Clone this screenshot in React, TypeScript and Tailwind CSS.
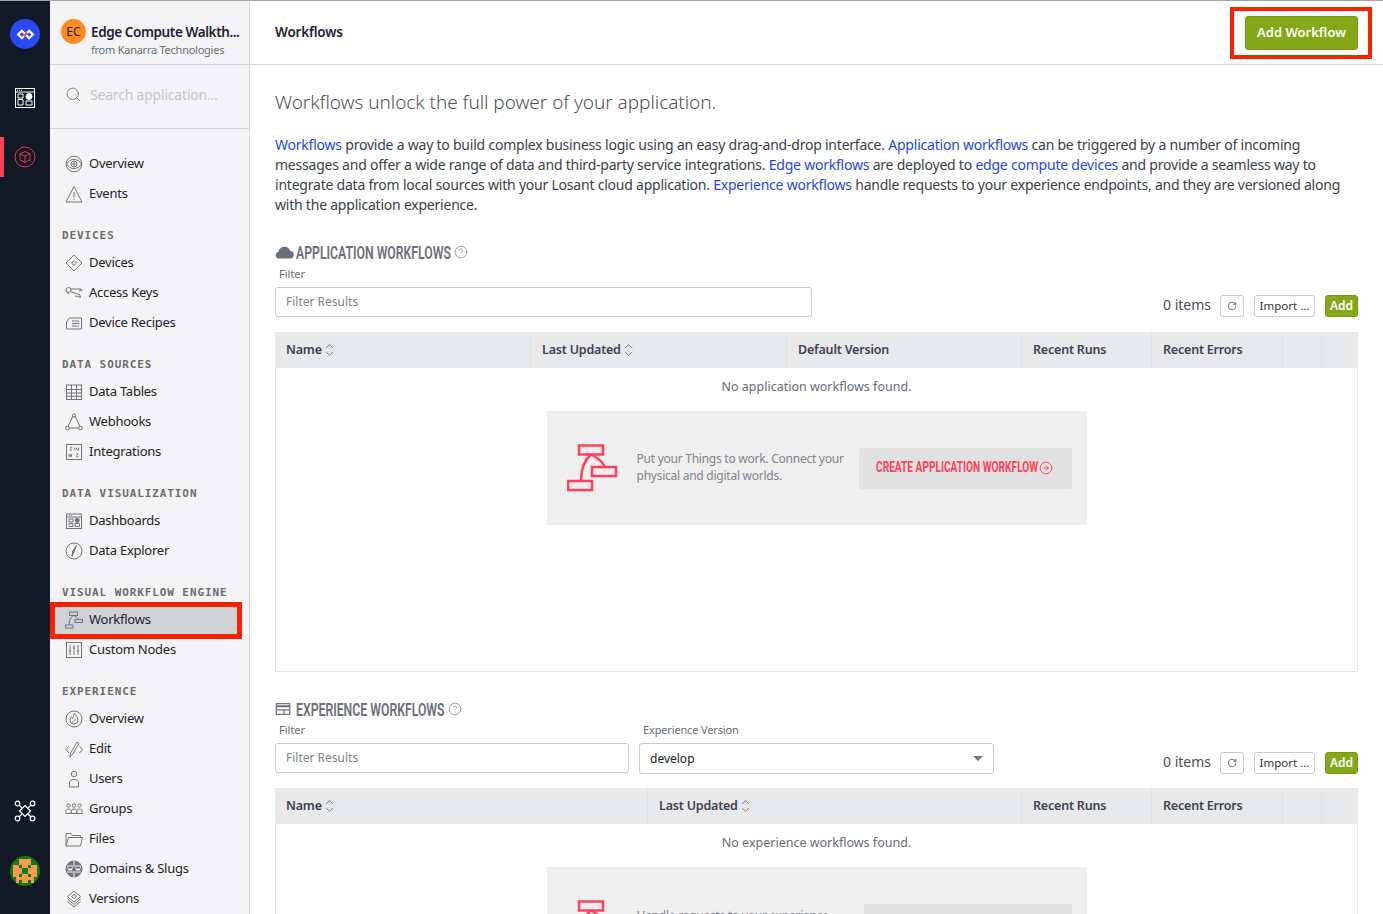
import React from "react";
import { Search, CircleHelp, RotateCw, CircleArrowRight } from "lucide-react";

const bodyFont = { fontFamily: '"Noto Sans", "Open Sans", sans-serif' };

const icons: Record<string, React.ReactNode> = {
  eye: (
    <>
      <circle cx="10" cy="10" r="7.8" />
      <path d="M2.6 10c2-3.2 4.5-4.6 7.4-4.6s5.4 1.4 7.4 4.6c-2 3.2-4.5 4.6-7.4 4.6S4.600 13.200 2.600 10z" />
      <circle cx="10" cy="10" r="3" />
      <circle cx="10" cy="10" r="1.200" />
    </>
  ),
  warn: (
    <>
      <path d="M10 2.500 18 18H2z" />
      <path d="M10 8v5.500M10 15v1" />
    </>
  ),
  device: (
    <>
      <path d="M10 2l8 8-8 8-8-8z" />
      <path d="M10 7.500l2.500 2.500-2.500 2.500L7.500 10z" />
    </>
  ),
  keys: (
    <>
      <circle cx="4.500" cy="7" r="2.500" />
      <path d="M7 6h10l1 1.500-3 .5M6.500 8.500 16 12l.5 2.500-3-1.500-1 1-1.500-1.500" />
      <path d="M3 9.500 5 11" />
    </>
  ),
  recipe: (
    <>
      <path d="M2.500 16V9l3-4h12v11z" />
      <path d="M8 8h7M8 10.500h7M8 13h7" />
    </>
  ),
  table: (
    <>
      <rect x="2.500" y="3" width="15" height="14.500" />
      <path d="M2.500 7.500h15M2.500 11h15M2.500 14.300h15M7.500 3v14.500M12.500 3v14.500" />
    </>
  ),
  hook: (
    <>
      <path d="M9 4 4 14.500M11 4l5 10.500M5 16h10" />
      <circle cx="10" cy="3.500" r="1.600" />
      <circle cx="3.500" cy="16" r="1.800" />
      <circle cx="16.500" cy="16" r="1.800" />
    </>
  ),
  puzzle: (
    <>
      <rect x="2.500" y="2.500" width="15" height="15" />
      <path d="M6 5.500c1-1 2-.5 1.500.500s-1.500 1-1 2 1.500.5 1.500-.2M11 5.500v3M14.500 5.500v3M12 6l2 2M5 12v3M8 12l-1 3-1-3M12 12c1.500-1 2.500 0 1.500 1s-1.500.8-1 1.600 1.500.5 2-.3" />
    </>
  ),
  dash: (
    <>
      <rect x="2.500" y="3" width="15" height="14.500" />
      <path d="M2.500 6h15M5 4.500h.8M7 4.500h.8M5 8h4v3H5zM5 12.500h4V15.500H5zM11 12.500h4.500v3H11z" />
      <circle cx="13.200" cy="9.300" r="2.100" fill="#6f7480" />
    </>
  ),
  compass: (
    <>
      <circle cx="10" cy="10" r="8" />
      <path d="M12.500 4.500 8 15.500l.8-5.500z" fill="#6f7480" />
    </>
  ),
  flow: (
    <>
      <rect x="5.500" y="2" width="8" height="3.500" />
      <rect x="11" y="9.500" width="7.500" height="3" />
      <rect x="1.500" y="15" width="7.500" height="3" />
      <path d="M9.500 5.500c-3 2-4.500 5-4.500 9.500M9.500 5.500c2 1 4 2 5 4" />
    </>
  ),
  sliders: (
    <>
      <rect x="2.500" y="2.500" width="15" height="15" />
      <path d="M6 5v10M10 5v10M14 5v10M4.800 11h2.400M8.800 8h2.400M12.800 11h2.400" />
    </>
  ),
  flame: (
    <>
      <circle cx="10" cy="10" r="8" />
      <path d="M10.500 4c.5 2.500 3.500 4 3.500 7a4 4 0 0 1-8 0c0-1.500.8-2.500 1.500-3 .2 1 .6 1.500 1.200 1.700C9.500 8 9.500 5.500 10.500 4z" />
      <path d="M8.500 13.500c.5-1.500 2-2.500 3.200-2.800" />
    </>
  ),
  edit: (
    <path d="M5 7 2 10.500 5 14M15.500 7l3 3.500-3 3.500M13 3l2 1.500L8 16l-2 2 .2-3z" />
  ),
  user: (
    <>
      <circle cx="10" cy="5" r="2.700" />
      <path d="M5.500 18v-4c0-2 1.500-3.500 4.500-3.500s4.500 1.500 4.500 3.500v4z" />
    </>
  ),
  group: (
    <>
      <circle cx="4.500" cy="6.500" r="1.700" />
      <circle cx="10" cy="6.500" r="1.700" />
      <circle cx="15.500" cy="6.500" r="1.700" />
      <path d="M1.800 14.500v-2c0-1.500 1-2.500 2.700-2.500s2.700 1 2.700 2.500v2zM7.300 14.500v-2c0-1.500 1-2.500 2.700-2.500s2.700 1 2.700 2.500v2zM12.800 14.500v-2c0-1.500 1-2.500 2.700-2.500s2.700 1 2.700 2.500v2z" />
    </>
  ),
  folder: (
    <>
      <path d="M2 17V4.500h5L8.500 6.500h8v2" />
      <path d="M2 17 4.500 8.500H18.500L16.500 17z" />
    </>
  ),
  globe: (
    <>
      <circle cx="10" cy="10" r="8" fill="#6f7480" />
      <path d="M3 7h14M3 13h14M10 2v4M10 14v4" stroke="#f4f4f6" />
      <path d="M3.500 8.500 5 11.500 6 9.500 7 11.500 8.500 8.500M11.500 8.500 13 11.500 14 9.500 15 11.500 16.500 8.500" stroke="#f4f4f6" />
    </>
  ),
  versions: (
    <>
      <path d="M10 2l6.500 5.500L10 13 3.500 7.500z" />
      <path d="M10 5.500l2.500 2-2.500 2-2.500-2z" />
      <path d="M3.500 10 10 15.500 16.500 10M3.500 12.500 10 18l6.500-5.500" />
    </>
  ),
};

function NavIcon({ name }: { name: string }) {
  return (
    <svg viewBox="0 0 20 20" className="w-[20px] h-[20px] shrink-0" fill="none" stroke="#6f7480" strokeWidth="1">
      {icons[name]}
    </svg>
  );
}

const groups = [
  { items: [["eye", "Overview"], ["warn", "Events"]] },
  { title: "DEVICES", items: [["device", "Devices"], ["keys", "Access Keys"], ["recipe", "Device Recipes"]] },
  { title: "DATA SOURCES", items: [["table", "Data Tables"], ["hook", "Webhooks"], ["puzzle", "Integrations"]] },
  { title: "DATA VISUALIZATION", items: [["dash", "Dashboards"], ["compass", "Data Explorer"]] },
  { title: "VISUAL WORKFLOW ENGINE", items: [["flow", "Workflows"], ["sliders", "Custom Nodes"]] },
  {
    title: "EXPERIENCE",
    items: [
      ["flame", "Overview"],
      ["edit", "Edit"],
      ["user", "Users"],
      ["group", "Groups"],
      ["folder", "Files"],
      ["globe", "Domains & Slugs"],
      ["versions", "Versions"],
    ],
  },
];

function Rail() {
  return (
    <div className="w-[50px] shrink-0 bg-[#111926] flex flex-col items-center relative">
      <div className="mt-[18px] w-[30px] h-[30px] rounded-full bg-[#2a49f5] flex items-center justify-center">
        <svg viewBox="0 0 20 12" className="w-[19px] h-[11px]" fill="none" strokeWidth="2.400">
          <path d="M10 6 6 2 2 6l4 4 4-4" stroke="#fff" />
          <path d="M10 6l4 4 4-4-4-4-4 4" stroke="#fff" />
          <path d="M8 8l4-4" stroke="#ff4058" />
        </svg>
      </div>
      <svg viewBox="0 0 20 20" className="mt-[39px] w-[20px] h-[20px]" fill="none" stroke="#fff" strokeWidth="1">
        <rect x="0.500" y="0.500" width="19" height="19" />
        <path d="M.5 4h19M2 2.200h1M4 2.200h1M6 2.200h1M3 6h5v4H3zM3 11.500h5V17H3zM11 13h6v4h-6z" />
        <circle cx="14" cy="8.500" r="3" fill="#fff" />
      </svg>
      <div className="absolute left-0 top-[136px] w-[4px] h-[40px] bg-[#ff4058]" />
      <svg viewBox="0 0 22 22" className="mt-[38px] w-[22px] h-[22px]" fill="none" stroke="#e8344c" strokeWidth="1">
        <circle cx="11" cy="11" r="10" />
        <path d="M11 5.500l5 2.200v6L11 16.500l-5-2.800v-6zM6 7.700l5 2.500 5-2.500M11 10.200v6.300" />
      </svg>
      <div className="flex-1" />
      <svg viewBox="0 0 24 24" className="w-[24px] h-[24px] mb-[33px]" fill="none" stroke="#fff" strokeWidth="1.200">
        <path d="M12 6.500l5.500 5.500-5.500 5.500L6.500 12z" />
        <circle cx="4.500" cy="4.500" r="2.300" />
        <circle cx="19.500" cy="4.500" r="2.300" />
        <circle cx="4.500" cy="19.500" r="2.300" />
        <circle cx="19.500" cy="19.500" r="2.300" />
        <path d="M6.200 6.200 9 9M17.800 6.200 15 9M6.200 17.800 9 15M17.800 17.800 15 15" />
      </svg>
      <div className="w-[30px] h-[30px] rounded-full bg-[#137a13] overflow-hidden mb-[28px] relative">
        <svg viewBox="0 0 10 10" className="w-full h-full" shapeRendering="crispEdges">
          <path fill="#f79a52" d="M3 1h4v2H6v1H4V3H3zM1 3h2v1h1v1h2V4h1V3h2v4H8v2H2V7H1zM3 6v1h1V6zM6 6v1h1V6z" />
          <path fill="#137a13" d="M4 5h2v1H4zM3 8h1v1H3zM6 8h1v1H6z" />
        </svg>
      </div>
    </div>
  );
}

function Sidebar() {
  return (
    <aside className="w-[200px] shrink-0 bg-[#f4f4f6] border-r border-[#d4d5d9] flex flex-col overflow-hidden">
      <div className="h-[64px] shrink-0 border-b border-[#d4d5d9] flex items-center pl-[11px]">
        <div className="w-[25px] h-[25px] rounded-full bg-[#ff8a1e] text-[#1c2230] text-[12px] flex items-center justify-center mb-[2px]">EC</div>
        <div className="ml-[5px] min-w-0 mt-[14px]">
          <div className="text-[13.500px] leading-[18px] font-semibold text-[#1c2230] whitespace-nowrap tracking-[-0.4px]">Edge Compute Walkth...</div>
          <div className="text-[11px] leading-[14px] text-[#676c77] whitespace-nowrap mt-[2px] tracking-[-0.25px]">from Kanarra Technologies</div>
        </div>
      </div>
      <div className="h-[64px] shrink-0 border-b border-[#d4d5d9] flex items-center pl-[15px] pb-[4px]">
        <Search className="w-[17px] h-[17px] text-[#6f7480]" strokeWidth={1.300} />
        <span className="ml-[8px] text-[14px] text-[#c4c5c9] tracking-[-0.2px]">Search application...</span>
      </div>
      <nav className="pt-[20px]">
        {groups.map((g, i) => (
          <div key={i} className={g.title ? "mt-[15px]" : ""}>
            {g.title && (
              <div
                className="h-[24px] flex items-center pl-[12px] text-[11px] font-bold text-[#6c6c6c] tracking-[0.9px] whitespace-nowrap"
                style={{ fontFamily: '"DejaVu Sans Mono", monospace' }}
              >
                {g.title}
              </div>
            )}
            {g.items.map(([icon, label]) =>
              label === "Workflows" ? (
                <div key={label} className="relative w-[192px] h-[30px] flex items-center pl-[14px] bg-[#d1d2d5]">
                  <NavIcon name={icon} />
                  <span className="ml-[5px] text-[13px] text-[#1c2230] tracking-[-0.25px]">{label}</span>
                  <div className="absolute left-0 -top-[3px] w-[192px] h-[37px] border-[5px] border-[#fa2100]" />
                </div>
              ) : (
                <div key={icon + label} className="h-[30px] flex items-center pl-[14px]">
                  <NavIcon name={icon} />
                  <span className="ml-[5px] text-[13px] text-[#1c2230] tracking-[-0.25px]">{label}</span>
                </div>
              )
            )}
          </div>
        ))}
      </nav>
    </aside>
  );
}

function SortHead({ label }: { label: string }) {
  return (
    <div className="flex items-center pl-[11px] border-r border-[#dfe0e3]">
      <span className="text-[12.500px] font-semibold text-[#3d4350] tracking-[-0.2px]">{label}</span>
      <svg viewBox="0 0 10 15" className="ml-[3px] w-[9px] h-[14px]" fill="none" stroke="#6f7480" strokeWidth="1">
        <path d="M1 5.500 5 1.500l4 4M1 9.500l4 4 4-4" />
      </svg>
    </div>
  );
}

function PlainHead({ label }: { label: string }) {
  return (
    <div className="flex items-center pl-[11px] border-r border-[#dfe0e3]">
      <span className="text-[12.500px] font-semibold text-[#3d4350] tracking-[-0.2px]">{label}</span>
    </div>
  );
}

function FlowGraphic() {
  return (
    <svg viewBox="0 0 52 48" className="w-[52px] h-[48px]" fill="none" stroke="#ff4058" strokeWidth="2.500">
      <rect x="12" y="1.500" width="24" height="9" />
      <rect x="25" y="23" width="24" height="9" />
      <rect x="1" y="37" width="24" height="9" />
      <path d="M24 10.500c-7 6-10 14-10 26.500M24 10.500c6 3 11 6 14 12.500" />
    </svg>
  );
}

function Toolbar() {
  return (
    <div className="flex items-center">
      <span className="text-[14px] text-[#4a4f5a] mr-[9px] mb-[2px]">0 items</span>
      <div className="w-[24px] h-[22px] border border-[#c9cacd] rounded-[3px] flex items-center justify-center">
        <RotateCw className="w-[10px] h-[10px] text-[#444]" strokeWidth={1.800} />
      </div>
      <div className="ml-[10px] w-[61px] h-[22px] border border-[#c9cacd] rounded-[3px] flex items-center justify-center text-[11.500px] text-[#333]">Import ...</div>
      <div className="ml-[10px] w-[33px] h-[22px] rounded-[3px] bg-[#84a818] border border-[#76981a] flex items-center justify-center text-[12px] font-semibold text-white">Add</div>
    </div>
  );
}

function SectionTitle({ icon, label, width }: { icon: React.ReactNode; label: string; width: string }) {
  return (
    <div className="flex items-center h-[20px]">
      {icon}
      <div className={`${width} ml-[2px] overflow-visible`}>
        <div
          className="origin-left scale-x-[0.68] text-[18px] font-semibold text-[#6b6f78] whitespace-nowrap"
          style={{ fontFamily: "Roboto, sans-serif" }}
        >
          {label}
        </div>
      </div>
      <CircleHelp className="ml-[3px] w-[14px] h-[14px] text-[#7a7e87]" strokeWidth={1.200} />
    </div>
  );
}

export default function App() {
  return (
    <div className="h-screen overflow-hidden flex border-t border-[#a3a3a3] bg-white" style={bodyFont}>
      <Rail />
      <Sidebar />
      <main className="flex-1 min-w-0 flex flex-col">
        <header className="h-[64px] shrink-0 border-b border-[#d4d5d9] flex items-center justify-between pl-[25px] pr-[25px]">
          <h1 className="text-[13.500px] font-semibold text-[#1c2230] tracking-[-0.2px]">Workflows</h1>
          <div className="relative">
            <button className="w-[113px] h-[34px] rounded-[3px] bg-[#84a818] border border-[#76981a] text-white text-[13px] font-semibold">
              Add Workflow
            </button>
            <div className="absolute -left-[15px] -top-[9px] w-[142px] h-[52px] border-[4px] border-[#fa2100]" />
          </div>
        </header>

        <div className="flex-1 overflow-hidden pl-[25px] pr-[25px]">
          <h2 className="mt-[24px] text-[19px] leading-[26px] font-light text-[#4f535c] tracking-[-0.05px]">
            Workflows unlock the full power of your application.
          </h2>
          <p className="mt-[20px] text-[14px] leading-[20px] text-[#3a3f4a] tracking-[-0.22px]">
            <a className="text-[#1f48e0]">Workflows</a> provide a way to build complex business logic using an easy drag-and-drop interface.{" "}
            <a className="text-[#1f48e0]">Application workflows</a> can be triggered by a number of incoming messages and offer a wide range of data and third-party service integrations.{" "}
            <a className="text-[#1f48e0]">Edge workflows</a> are deployed to <a className="text-[#1f48e0]">edge compute devices</a> and provide a seamless way to integrate data from local sources with your Losant cloud application.{" "}
            <a className="text-[#1f48e0]">Experience workflows</a> handle requests to your experience endpoints, and they are versioned along with the application experience.
          </p>

          <section className="mt-[27px]">
            <SectionTitle
              label="APPLICATION WORKFLOWS"
              width="w-[155px]"
              icon={
                <svg viewBox="0 0 20 14" className="w-[19px] h-[13px]" fill="#6b6f78">
                  <path d="M4 13.500a3.700 3.700 0 0 1-.6-7.300C4 3 7 .8 10 .8c3 0 5.500 2 6.300 4.700a4 4 0 0 1-.6 8z" />
                </svg>
              }
            />
            <div className="mt-[4px] pl-[4px] text-[11px] leading-[16px] text-[#676c77]">Filter</div>
            <div className="flex items-end justify-between mt-[5px]">
              <div className="w-[537px] h-[30px] border border-[#c9cacd] rounded-[3px] flex items-center pl-[10px] text-[12px] text-[#80848d]">Filter Results</div>
              <Toolbar />
            </div>
            <div className="mt-[15px] grid grid-cols-[256px_256px_235px_130px_131px_39px_36px] h-[36px] bg-[#e8e9eb]">
              <SortHead label="Name" />
              <SortHead label="Last Updated" />
              <PlainHead label="Default Version" />
              <PlainHead label="Recent Runs" />
              <PlainHead label="Recent Errors" />
              <div className="border-r border-[#dfe0e3]" />
              <div />
            </div>
            <div className="h-[304px] border-x border-b border-[#e6e6e8] flex flex-col items-center">
              <div className="mt-[10px] text-[12.500px] leading-[18px] text-[#676c77]">No application workflows found.</div>
              <div className="mt-[15px] w-[540px] h-[114px] bg-[#efefef] flex items-center pl-[20px]">
                <FlowGraphic />
                <div className="ml-[18px] w-[222px] text-[12px] leading-[17px] text-[#80848d] tracking-[-0.25px] mb-[2px]">
                  Put your Things to work. Connect your physical and digital worlds.
                </div>
                <div className="w-[213px] h-[41px] rounded-[3px] bg-[#e1e1e1] flex items-center pl-[17px]">
                  <span className="w-[162px] block">
                    <span
                      className="block origin-left scale-x-[0.7] text-[14.500px] font-bold text-[#ff4058] whitespace-nowrap"
                      style={{ fontFamily: "Roboto, sans-serif" }}
                    >
                      CREATE APPLICATION WORKFLOW
                    </span>
                  </span>
                  <CircleArrowRight className="ml-[1px] w-[14px] h-[14px] text-[#ff4058]" strokeWidth={1.500} />
                </div>
              </div>
            </div>
          </section>

          <section className="mt-[27px]">
            <SectionTitle
              label="EXPERIENCE WORKFLOWS"
              width="w-[149px]"
              icon={
                <svg viewBox="0 0 16 13" className="w-[16px] h-[12px] mr-[3px]" fill="none" stroke="#6b6f78" strokeWidth="1.300">
                  <rect x="0.700" y="0.700" width="14.600" height="11.600" />
                  <path d="M.7 3.500h14.600" strokeWidth="2.200" />
                  <path d="M.7 7.500h14.600M9 7.500v4.800" />
                </svg>
              }
            />
            <div className="mt-[3px] flex text-[11px] leading-[16px] text-[#676c77]">
              <div className="w-[368px] pl-[4px]">Filter</div>
              <div className="tracking-[-0.15px]">Experience Version</div>
            </div>
            <div className="flex items-end justify-between mt-[5px]">
              <div className="flex items-start">
                <div className="w-[354px] h-[30px] border border-[#c9cacd] rounded-[3px] flex items-center pl-[10px] text-[12px] text-[#80848d]">Filter Results</div>
                <div className="ml-[10px] w-[355px] h-[31px] border border-[#c9cacd] rounded-[3px] flex items-center justify-between pl-[10px] pr-[10px] text-[12px] text-[#222]">
                  develop
                  <span className="w-0 h-0 border-x-[5px] border-x-transparent border-t-[5px] border-t-[#777]" />
                </div>
              </div>
              <Toolbar />
            </div>
            <div className="mt-[14px] grid grid-cols-[373px_374px_130px_131px_39px_36px] h-[36px] bg-[#e8e9eb]">
              <SortHead label="Name" />
              <SortHead label="Last Updated" />
              <PlainHead label="Recent Runs" />
              <PlainHead label="Recent Errors" />
              <div className="border-r border-[#dfe0e3]" />
              <div />
            </div>
            <div className="h-[200px] border-x border-[#e6e6e8] flex flex-col items-center">
              <div className="mt-[10px] text-[12.500px] leading-[18px] text-[#676c77]">No experience workflows found.</div>
              <div className="mt-[15px] w-[540px] h-[114px] bg-[#efefef] flex items-center pl-[20px]">
                <FlowGraphic />
                <div className="ml-[18px] w-[222px] text-[12px] leading-[17px] text-[#80848d] tracking-[-0.25px]">
                  Handle requests to your experience endpoints with a workflow.
                </div>
                <div className="ml-[5px] w-[208px] h-[41px] rounded-[3px] bg-[#e1e1e1]" />
              </div>
            </div>
          </section>
        </div>
      </main>
    </div>
  );
}
